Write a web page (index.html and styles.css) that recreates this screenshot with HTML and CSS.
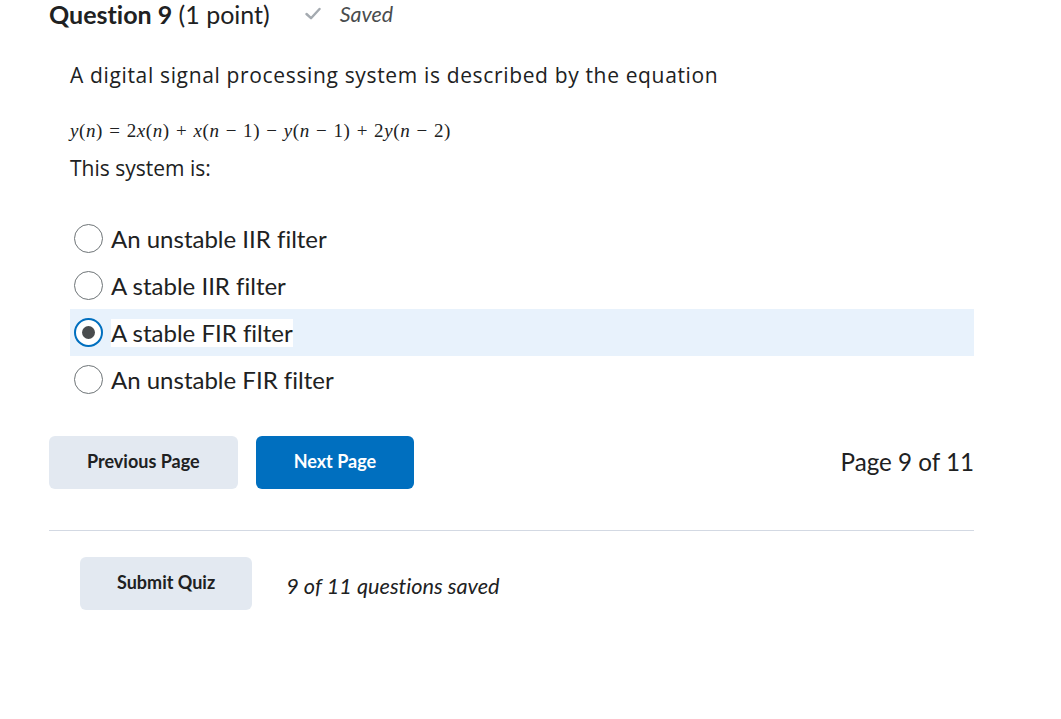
FILE: index.html
```html
<!DOCTYPE html>
<html>
<head>
<meta charset="utf-8">
<link rel="stylesheet" href="styles.css">
</head>
<body>
<div class="page">
  <div class="q-header">
    <h2 class="q-title"><strong>Question 9</strong> (1 point)</h2>
    <span class="saved">
      <svg class="check" width="16" height="13" viewBox="0 0 16 13"><path d="M1.5 7 L6 11.2 L14.5 2" fill="none" stroke="#a4aab0" stroke-width="2.4" stroke-linecap="round" stroke-linejoin="round"/></svg>
      <em>Saved</em>
    </span>
  </div>

  <div class="q-body">
    <p class="stem">A digital signal processing system is described by the equation</p>
    <p class="math"><i>y</i>(<i>n</i>) = 2<i>x</i>(<i>n</i>) + <i>x</i>(<i>n</i> − 1) − <i>y</i>(<i>n</i> − 1) + 2<i>y</i>(<i>n</i> − 2)</p>
    <p class="stem small">This system is:</p>
  </div>

  <div class="options">
    <label class="opt"><span class="radio"></span><span class="opt-text">An unstable IIR filter</span></label>
    <label class="opt"><span class="radio"></span><span class="opt-text">A stable IIR filter</span></label>
    <label class="opt selected"><span class="radio checked"></span><span class="opt-text hl">A stable FIR filter</span></label>
    <label class="opt"><span class="radio"></span><span class="opt-text">An unstable FIR filter</span></label>
  </div>

  <div class="nav">
    <div class="nav-buttons">
      <button class="btn btn-secondary">Previous Page</button>
      <button class="btn btn-primary">Next Page</button>
    </div>
    <div class="page-count">Page 9 of 11</div>
  </div>

  <hr class="divider">

  <div class="submit-row">
    <button class="btn btn-secondary submit">Submit Quiz</button>
    <em class="saved-count">9 of 11 questions saved</em>
  </div>
</div>
</body>
</html>
```
FILE: styles.css
```css
html, body {
  margin: 0;
  padding: 0;
  background: #ffffff;
}
body {
  font-family: Lato, "Open Sans", sans-serif;
  color: #202122;
  font-variant-ligatures: none;
}
.page {
  width: 925px;
  padding-left: 49px;
}
.q-header {
  display: flex;
  align-items: center;
  height: 28px;
}
.q-title {
  margin: 0;
  font-size: 25px;
  font-weight: 400;
  line-height: 28px;
  color: #202122;
}
.q-title strong {
  font-weight: 700;
}
.saved {
  display: flex;
  align-items: center;
  margin-left: 35px;
  font-size: 21.4px;
  color: #494c4e;
}
.check {
  margin-right: 19px;
  margin-top: -2px;
}
.saved em {
  font-style: italic;
}
.q-body {
  padding-left: 21px;
  padding-top: 32px;
}
.stem {
  margin: 0;
  font-family: "Open Sans", sans-serif;
  font-size: 21px;
  line-height: 30px;
  color: #202122;
  letter-spacing: 0.65px;
}
.stem.small {
  margin-top: 11px;
  letter-spacing: 0;
}
.math {
  margin: 30px 0 0 0;
  font-family: "Liberation Serif", "DejaVu Serif", serif;
  font-size: 19px;
  line-height: 22px;
  color: #202122;
  word-spacing: 0.8px;
  letter-spacing: 0.6px;
}
.math i {
  font-style: italic;
}
.options {
  margin-top: 32px;
  padding-left: 21px;
  display: flex;
  flex-direction: column;
}
.opt {
  display: flex;
  align-items: center;
  height: 47px;
  padding-left: 4px;
  font-size: 24px;
  color: #202122;
}
.opt.selected {
  background: #e8f2fc;
}
.radio {
  width: 29px;
  height: 29px;
  box-sizing: border-box;
  border: 1px solid #6e7477;
  border-radius: 50%;
  background: #fff;
  margin-right: 8px;
  flex: none;
  display: flex;
  align-items: center;
  justify-content: center;
}
.radio.checked {
  border: 2px solid #006fbf;
}
.radio.checked::after {
  content: "";
  width: 13px;
  height: 13px;
  border-radius: 50%;
  background: #494c4e;
}
.opt-text {
  line-height: 28px;
}
.opt-text.hl {
  background: #ffffff;
}
.nav {
  margin-top: 33px;
  display: flex;
  align-items: center;
  justify-content: space-between;
}
.nav-buttons {
  display: flex;
  gap: 18px;
}
.btn {
  font-family: Lato, sans-serif;
  font-weight: 700;
  font-size: 18px;
  height: 53px;
  border: none;
  border-radius: 6px;
  padding: 0 38px 3px 38px;
  cursor: pointer;
}
.btn-secondary {
  background: #e3e9f1;
  color: #202122;
}
.btn-primary {
  background: #006fbf;
  color: #ffffff;
}
.page-count {
  font-size: 24.2px;
  color: #202122;
  padding-bottom: 3px;
}
.divider {
  margin: 41px 0 0 0;
  border: none;
  border-top: 1px solid #d3d9e3;
}
.submit-row {
  margin-top: 26px;
  padding-left: 31px;
  display: flex;
  align-items: center;
}
.submit {
  padding: 0 37px 3px 37px;
}
.saved-count {
  margin-left: 34px;
  margin-top: 4px;
  font-style: italic;
  font-size: 21.7px;
  color: #202122;
}
```
